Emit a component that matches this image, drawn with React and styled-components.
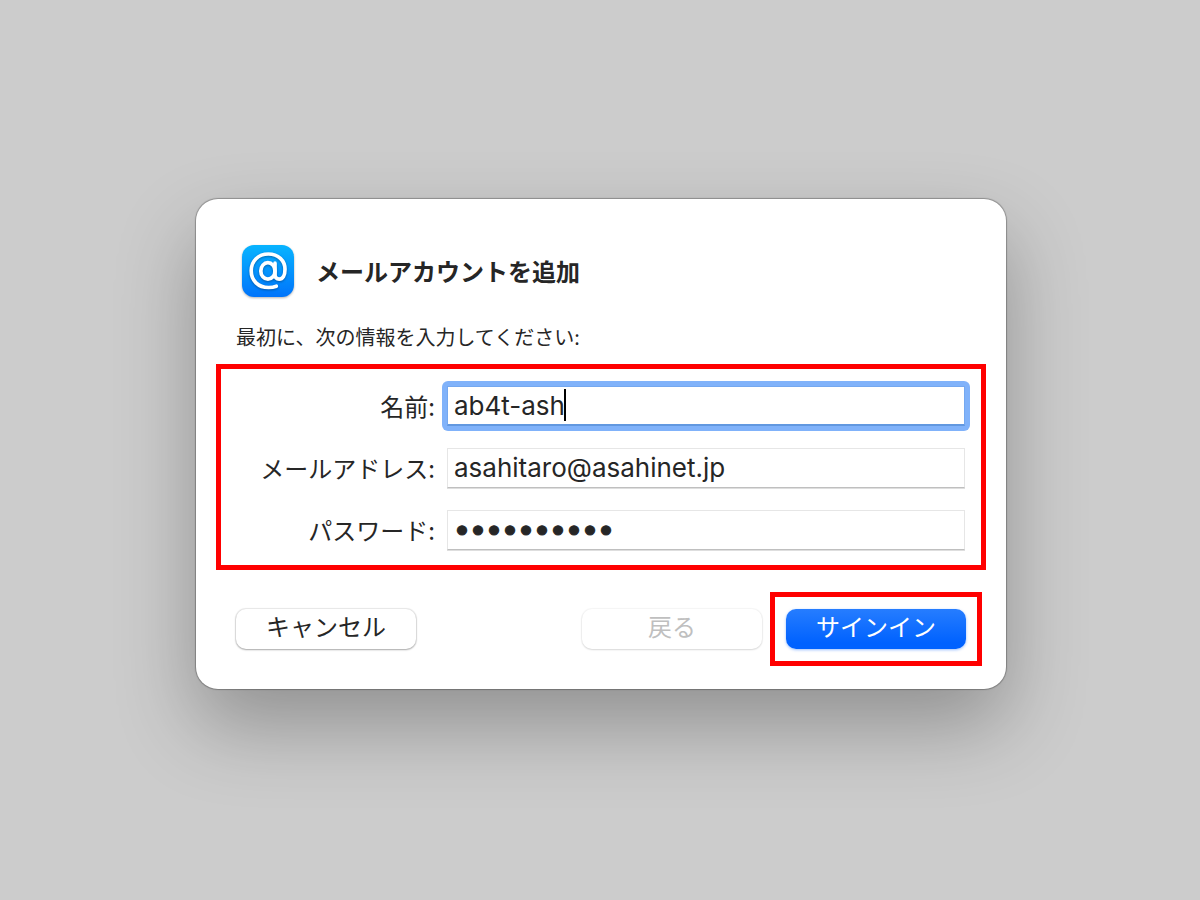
import React from "react";
import styled, { createGlobalStyle, css } from "styled-components";

const GlobalStyle = createGlobalStyle`
  *, *::before, *::after { box-sizing: border-box; }
  body {
    margin: 0;
    background: #cccccc;
    color: #262626;
    font-family: Inter, "Noto Sans CJK JP", sans-serif;
  }
`;

const Page = styled.main`
  display: flex;
  align-items: center;
  justify-content: center;
  min-height: 100vh;
  padding: 12px 12px 24px 14px;
`;

const Dialog = styled.form`
  width: 100%;
  max-width: 810px;
  padding: 46px 0 23px;
  border-radius: 22px;
  background: #ffffff;
  box-shadow: 0 0 1px 1px rgba(0, 0, 0, 0.28), 0 36px 80px rgba(0, 0, 0, 0.29);
`;

const Header = styled.header`
  display: flex;
  align-items: center;
  gap: 22px;
  padding: 0 46px;
`;

const AppIcon = styled.svg`
  flex: none;
  width: 52px;
  height: 52px;
  overflow: visible;
  filter: drop-shadow(0 1px 1px rgba(0, 0, 0, 0.3));
`;

const Title = styled.h1`
  margin: 0;
  font-family: "Noto Sans CJK JP", sans-serif;
  font-size: 24px;
  line-height: 32px;
  font-weight: 700;
`;

const Lead = styled.p`
  margin: 28px 40px 15px;
  font-family: "Noto Sans CJK JP", sans-serif;
  font-size: 20px;
  line-height: 24px;
`;

const highlight = css`
  border: 5px solid #ff0000;
`;

const Fields = styled.div`
  ${highlight}
  display: grid;
  gap: 22px;
  margin: 0 20px 22px;
  padding: 17px 16px 15px;
`;

const Row = styled.div`
  display: grid;
  grid-template-columns: 198px minmax(0, 1fr);
  align-items: center;
  gap: 12px;
`;

const Label = styled.label`
  text-align: right;
  white-space: nowrap;
  font-family: "Noto Sans CJK JP", sans-serif;
  font-size: 24px;
  line-height: 32px;
`;

const Control = styled.div`
  position: relative;

  ${(p) =>
    p.$active &&
    css`
      &::before {
        content: "";
        position: absolute;
        inset: -5px;
        border-radius: 6px;
        background: #80b2fa;
      }
    `}
`;

const Input = styled.input`
  position: relative;
  display: block;
  width: 100%;
  height: 40px;
  padding: 0 6px 2px;
  border: 1px solid #e6e6e6;
  border-bottom-color: #bfbfbf;
  border-radius: 0;
  outline: none;
  background: #ffffff;
  color: #262626;
  font-family: inherit;
  font-size: 26px;
  box-shadow: 0 1px 0 #dedede;

  &[type="password"] {
    padding-bottom: 4px;
    font-size: 30px;
    font-weight: 500;
    -webkit-text-stroke: 1px #262626;
  }

  ${(p) =>
    p.$active &&
    css`
      padding-bottom: 1px;
      border: 1px solid #74a8f0;
      border-bottom: 2px solid #6298e0;
      box-shadow: none;
    `}
`;

const Caret = styled.span`
  position: absolute;
  top: 3px;
  left: 117px;
  width: 2px;
  height: 32px;
  background: #000000;
`;

const Actions = styled.footer`
  display: flex;
  align-items: center;
  gap: 8px;
  padding: 0 24px 0 40px;
`;

const Button = styled.button`
  width: 180px;
  height: 40px;
  padding: 0 0 6px;
  border: 0;
  border-radius: 10px;
  background: #ffffff;
  color: #262626;
  font-family: "Noto Sans CJK JP", sans-serif;
  font-size: 24px;
  line-height: 32px;
  box-shadow: 0 0 1px 1px rgba(0, 0, 0, 0.09), 0 1px 2px rgba(0, 0, 0, 0.28);

  &:disabled {
    color: #bfbfbf;
    box-shadow: 0 0 1px 1px rgba(0, 0, 0, 0.04), 0 1px 2px rgba(0, 0, 0, 0.12);
  }
`;

const CancelButton = styled(Button)`
  margin-right: auto;
`;

const PrimaryButton = styled(Button)`
  display: block;
  background: linear-gradient(#267dff, #0062ff 85%);
  color: #ffffff;
  box-shadow: 0 1px 3px rgba(0, 98, 255, 0.4);
`;

const PrimaryFrame = styled.div`
  ${highlight}
  padding: 12px 11px;
`;

function MailAccountIcon() {
  return (
    <AppIcon viewBox="0 0 52 52" aria-hidden="true">
      <defs>
        <linearGradient id="tile" x1="0" y1="0" x2="0" y2="1">
          <stop offset="0" stopColor="#08b4ff" />
          <stop offset="1" stopColor="#0074fb" />
        </linearGradient>
        <filter id="lift" x="-20%" y="-20%" width="140%" height="150%" colorInterpolationFilters="sRGB">
          <feDropShadow dx="0" dy="1" stdDeviation="0.8" floodColor="#00356e" floodOpacity="0.55" />
        </filter>
      </defs>
      <rect width="52" height="52" rx="12" fill="url(#tile)" />
      <g fill="none" stroke="#ffffff" strokeWidth="3.7" strokeLinecap="round" filter="url(#lift)">
        <path d="M34.3 41.2C32 42.1 29.6 42.5 26.6 42.5C16.2 42.5 9.2 35.6 9.2 25.8C9.2 16 16.3 9 26.4 9C36.2 9 43 15.3 43 24.3C43 30.4 40.7 34.2 37.2 34.2C34.5 34.2 33 32.5 33 29.6V18.2" />
        <ellipse cx="25.9" cy="25.9" rx="7.1" ry="8.2" />
      </g>
    </AppIcon>
  );
}

function Field({ id, label, active, ...input }) {
  return (
    <Row>
      <Label htmlFor={id}>{label}</Label>
      <Control $active={active}>
        <Input id={id} $active={active} {...input} />
        {active && <Caret />}
      </Control>
    </Row>
  );
}

export default function App() {
  return (
    <>
      <GlobalStyle />
      <Page>
        <Dialog onSubmit={(e) => e.preventDefault()}>
          <Header>
            <MailAccountIcon />
            <Title>メールアカウントを追加</Title>
          </Header>
          <Lead>最初に、次の情報を入力してください:</Lead>
          <Fields>
            <Field id="name" label="名前:" type="text" defaultValue="ab4t-ash" active />
            <Field id="email" label="メールアドレス:" type="email" defaultValue="asahitaro@asahinet.jp" />
            <Field id="password" label="パスワード:" type="password" defaultValue="asahi12345" />
          </Fields>
          <Actions>
            <CancelButton type="button">キャンセル</CancelButton>
            <Button type="button" disabled>戻る</Button>
            <PrimaryFrame>
              <PrimaryButton type="submit">サインイン</PrimaryButton>
            </PrimaryFrame>
          </Actions>
        </Dialog>
      </Page>
    </>
  );
}
